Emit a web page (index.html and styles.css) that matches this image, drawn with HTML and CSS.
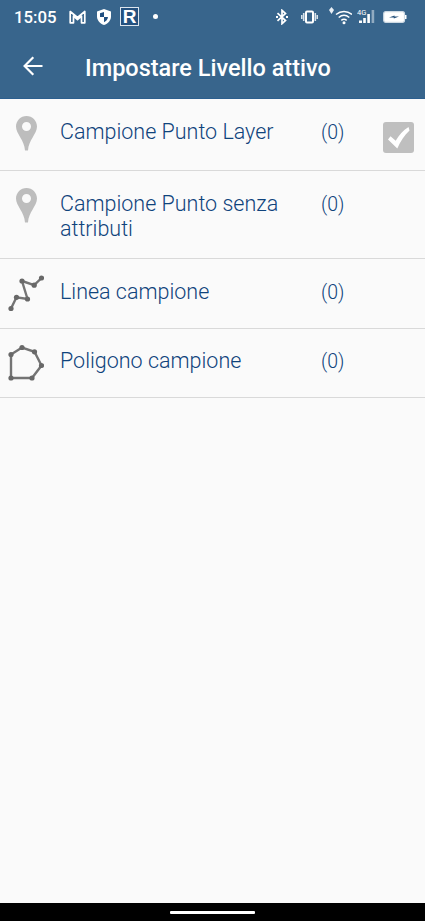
FILE: index.html
```html
<!DOCTYPE html>
<html lang="it">
<head>
<meta charset="utf-8">
<meta name="viewport" content="width=device-width, initial-scale=1">
<title>Impostare Livello attivo</title>
<link rel="stylesheet" href="styles.css">
</head>
<body>
<div class="screen">
  <div class="status">
    <span class="clock">15:05</span>
    <svg class="mail" width="17" height="14" viewBox="0 0 17 14"><path d="M4.500 12.800H1.200V1.500L8.500 7.500l7.300-6v11.300H12.500V6L8.500 9.500 4.500 6z" fill="none" stroke="#fff" stroke-width="1.700" stroke-linejoin="round"/></svg>
    <svg class="shield" width="14" height="16" viewBox="0 0 14 16"><path d="M7 0l7 2.500v5C14 11.500 11 14.700 7 16 3 14.700 0 11.500 0 7.500v-5z" fill="#fff"/><path d="M7 3v5H3V4.300zM7 8h4c-.3 2.500-1.800 4.200-4 5.300z" fill="#1f4f82"/></svg>
    <span class="app-r">R</span>
    <span class="dot"></span>
    <span class="spacer"></span>
    <svg class="bluetooth" width="12" height="16" viewBox="0 0 12 16"><path d="M1.500 4.200l8 7.300L6 14.700V1.300l3.500 3.200-8 7.300" fill="none" stroke="#fff" stroke-width="1.700"/><path d="M0 7h2v2H0zM10 7h2v2h-2z" fill="#fff"/></svg>
    <svg class="vibrate" width="17" height="14" viewBox="0 0 17 14"><rect x="5" y="1.500" width="7" height="11" rx="1" fill="none" stroke="#fff" stroke-width="2"/><path d="M2.700 3v8M14.300 3v8M.7 5v4M16.300 5v4" stroke="#d6e1ea" stroke-width="1.600"/></svg>
    <svg class="wifi" width="23" height="20" viewBox="0 0 23 20"><path d="M2.500 0L5 3 2.500 7 0 3z" fill="#e8eef4"/><g fill="none" stroke="#fff" stroke-width="1.500"><path d="M7 7.500c4.800-4 11.200-4 16 0M9.700 10.500c3.200-2.700 7.400-2.700 10.600 0M12.300 13.300c1.700-1.300 3.700-1.300 5.400 0"/></g><circle cx="15" cy="15.800" r="1.500" fill="#fff"/></svg>
    <svg class="signal" width="18" height="17" viewBox="0 0 18 17"><text class="network" x="0" y="6.500">4G</text><path d="M2 12.500h3V15H2zM6.200 10h2.600v5H6.200zM10.300 6h2.600v9h-2.600z" fill="#fff"/><path d="M14.600 2h2.600v13h-2.600z" fill="#91abc1"/></svg>
    <svg class="battery" width="24" height="12" viewBox="0 0 24 12"><rect x=".7" y=".7" width="20.800" height="10.600" rx="2" fill="#fff" stroke="#cdd9e3" stroke-width="1.200"/><path d="M22 4h1.500v4H22z" fill="#fff"/><path d="M6 6.500L11.500 4.500v1H16L10.800 7.500v-1z" fill="#24517b"/></svg>
  </div>
  <header class="bar">
    <svg width="20" height="20" viewBox="0 0 20 20"><path d="M19.500 10H1.800M10.300 1.300L1.600 10l8.700 8.700" fill="none" stroke="#fff" stroke-width="2.200"/></svg>
    <h1>Impostare Livello attivo</h1>
  </header>
  <ul class="layers">
    <li class="layer first">
      <svg class="pin" width="21" height="35" viewBox="0 0 21 35"><path fill-rule="evenodd" d="M10.500 0C16.300 0 21 4.700 21 10.500 21 18 12.500 24 12 34.500H9C8.500 24 0 18 0 10.500 0 4.700 4.700 0 10.500 0zM10.500 6a4.500 4.500 0 100 9 4.500 4.500 0 000-9z" fill="#bdbdbd"/></svg>
      <span class="name">Campione Punto Layer</span><span class="count">(0)</span>
      <svg class="check" width="31" height="31" viewBox="0 0 31 31"><rect width="31" height="31" rx="3" fill="#bfbfbf"/><path d="M5 17.500l2.500-3.200 5.200 4.500C16 13 20 8.300 25.500 5L26.500 8.500C21.500 13.500 17.500 19 14.300 26.500z" fill="#fff"/></svg>
    </li>
    <li class="layer second">
      <svg class="pin" width="21" height="35" viewBox="0 0 21 35"><path fill-rule="evenodd" d="M10.500 0C16.300 0 21 4.700 21 10.500 21 18 12.500 24 12 34.500H9C8.500 24 0 18 0 10.500 0 4.700 4.700 0 10.500 0zM10.500 6a4.500 4.500 0 100 9 4.500 4.500 0 000-9z" fill="#bdbdbd"/></svg>
      <span class="name">Campione Punto senza attributi</span><span class="count">(0)</span>
    </li>
    <li class="layer">
      <svg class="shape" width="36" height="38" viewBox="0 0 36 38"><path d="M3 34.500L8.500 23.300l11 1.700L14 7l12.200 4.200L33.500 4" fill="none" stroke="#747474" stroke-width="2.400"/><g fill="#686868"><circle cx="3" cy="34.500" r="2.600"/><circle cx="8.500" cy="23.300" r="2.600"/><circle cx="19.500" cy="25" r="2.600"/><circle cx="14" cy="7" r="2.600"/><circle cx="26.200" cy="11.200" r="2.600"/><circle cx="33.500" cy="4" r="2.600"/></g></svg>
      <span class="name">Linea campione</span><span class="count">(0)</span>
    </li>
    <li class="layer last">
      <svg class="shape" width="36" height="38" viewBox="0 0 36 38"><path d="M3 10.500L14 3.500l12.500 4.300L33.500 21.500 24 34H3z" fill="none" stroke="#747474" stroke-width="2.400"/><g fill="#686868"><circle cx="3" cy="10.500" r="2.600"/><circle cx="14" cy="3.500" r="2.600"/><circle cx="26.500" cy="7.800" r="2.600"/><circle cx="33.500" cy="21.500" r="2.600"/><circle cx="24" cy="34" r="2.600"/><circle cx="3" cy="34" r="2.600"/></g></svg>
      <span class="name">Poligono campione</span><span class="count">(0)</span>
    </li>
  </ul>
  <div class="nav"><span class="handle"></span></div>
</div>
</body>
</html>
```
FILE: styles.css
```css
* { box-sizing: border-box; }
body { margin: 0; font-family: Roboto, sans-serif; background: #fafafa; }
.screen { height: 921px; display: flex; flex-direction: column; overflow: hidden; }
.status { height: 34px; flex: none; background: #38658c; color: #fff; display: flex; align-items: center; padding: 0 18px 0 14px; }
.status svg { flex: none; display: block; }
.mail, .signal, .wifi, .battery { margin-top: -1px; }
.clock { width: 55px; font-size: 16.8px; font-weight: 500; line-height: 34px; white-space: nowrap; }
.shield { margin-left: 11px; }
.app-r { width: 19px; height: 19px; margin: -1px 0 0 9px; border: 1.5px solid #dce5ed; background: #24517f; font: bold 19px/18px "Liberation Sans", sans-serif; text-align: center; }
.dot { width: 5px; height: 5px; margin: -1px 0 0 14px; border-radius: 50%; background: #fff; }
.spacer { flex: 1; }
.vibrate { margin-left: 13px; }
.wifi { margin-left: 11px; }
.signal { margin-left: 5px; }
.battery { margin-left: 8px; }
.network { font: 400 7.500px Roboto, sans-serif; fill: #fff; }
.bar { height: 65px; flex: none; display: flex; align-items: center; padding-left: 23px; background: #38658c; border-bottom: 1px solid #2c5f8f; }
.bar h1 { margin: 3px 0 0 42px; font-size: 23.5px; font-weight: 500; line-height: 30px; color: #fff; white-space: nowrap; }
.layers { margin: 0; padding: 0; list-style: none; flex: 1; }
.layer { height: 70px; display: flex; align-items: flex-start; padding: 20px 11px 0 8px; border-bottom: 1px solid #d9d9d9; color: #0f437c; font-size: 21.5px; font-weight: 350; line-height: 25px; }
.first { height: 72px; }
.second { height: 88px; }
.last { height: 69px; padding-top: 19px; }
.pin { margin: -3px 7px 0 8px; flex: none; }
.shape { margin: -5px 0 0; flex: none; }
.last .shape { margin-top: -4px; }
.name { width: 245px; margin-left: 16px; padding-right: 20px; }
.count { width: 62px; margin: 1px 0 0 16px; font-size: 19.5px; }
.check { margin-top: 3px; margin-left: auto; flex: none; }
.nav { height: 18px; flex: none; background: #000; display: flex; justify-content: center; align-items: center; }
.handle { width: 85px; height: 3px; margin-top: 1px; border-radius: 1px; background: #fff; }
```
